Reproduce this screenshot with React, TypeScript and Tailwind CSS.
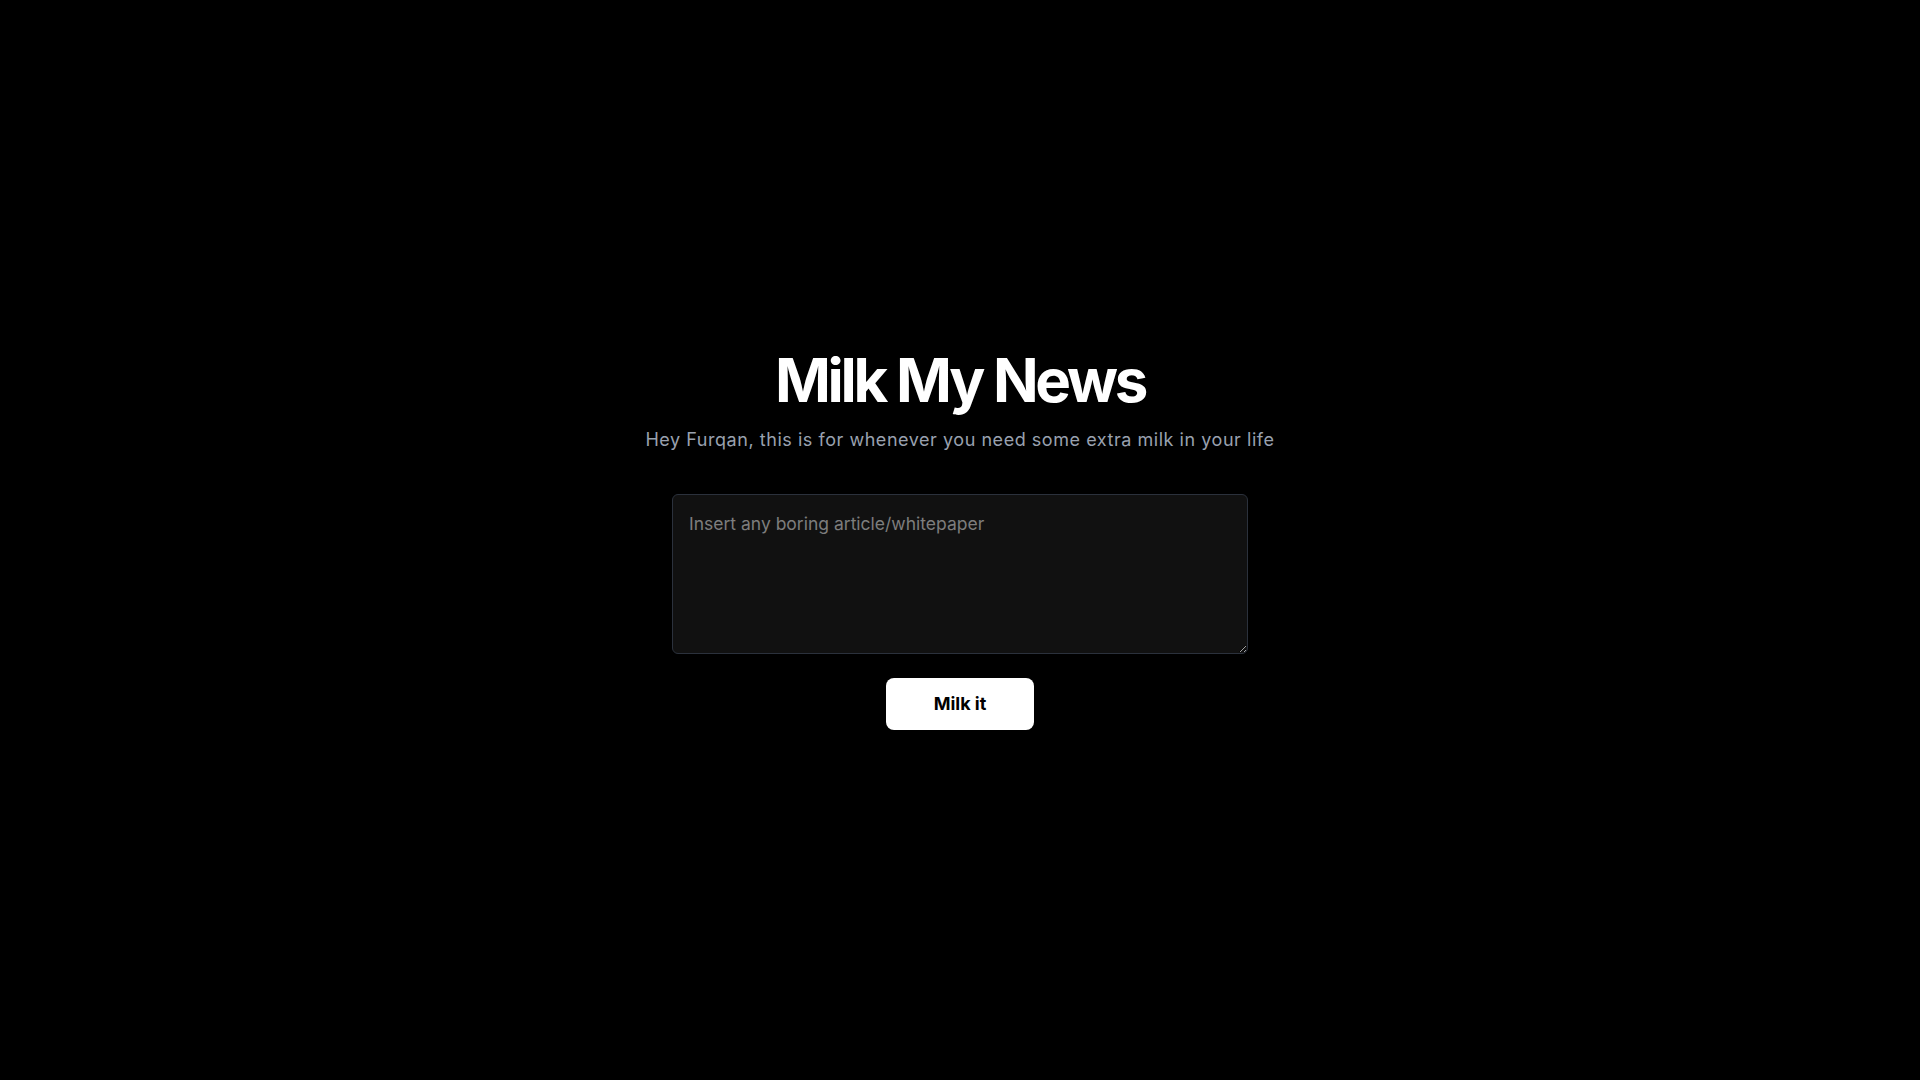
import { useState } from 'react'

export default function App() {
  const [text, setText] = useState('')

  return (
    <div
      className="flex min-h-screen w-full items-center justify-center bg-black text-white"
      style={{ fontFamily: 'Inter, "Liberation Sans", sans-serif' }}
    >
      <main className="flex w-full flex-col items-center">
        <h1 className="text-6xl leading-none font-bold tracking-[-0.055em] text-white">
          Milk My News
        </h1>
        <p className="mt-4 text-lg tracking-[0.03em] text-gray-400">
          Hey Furqan, this is for whenever you need some extra milk in your life
        </p>

        <textarea
          value={text}
          onChange={(e) => setText(e.target.value)}
          placeholder="Insert any boring article/whitepaper"
          className="mt-10 h-[160px] w-[576px] rounded-md border border-[#2b313c] bg-[#111111] px-4 pt-[17px] pb-4 text-[17.5px] leading-6 text-white placeholder:text-[#7d7d7d] focus:outline-none"
        />

        <button
          type="button"
          className="mt-6 rounded-lg bg-white px-12 py-3 text-lg font-bold text-black"
        >
          Milk it
        </button>
      </main>
    </div>
  )
}
